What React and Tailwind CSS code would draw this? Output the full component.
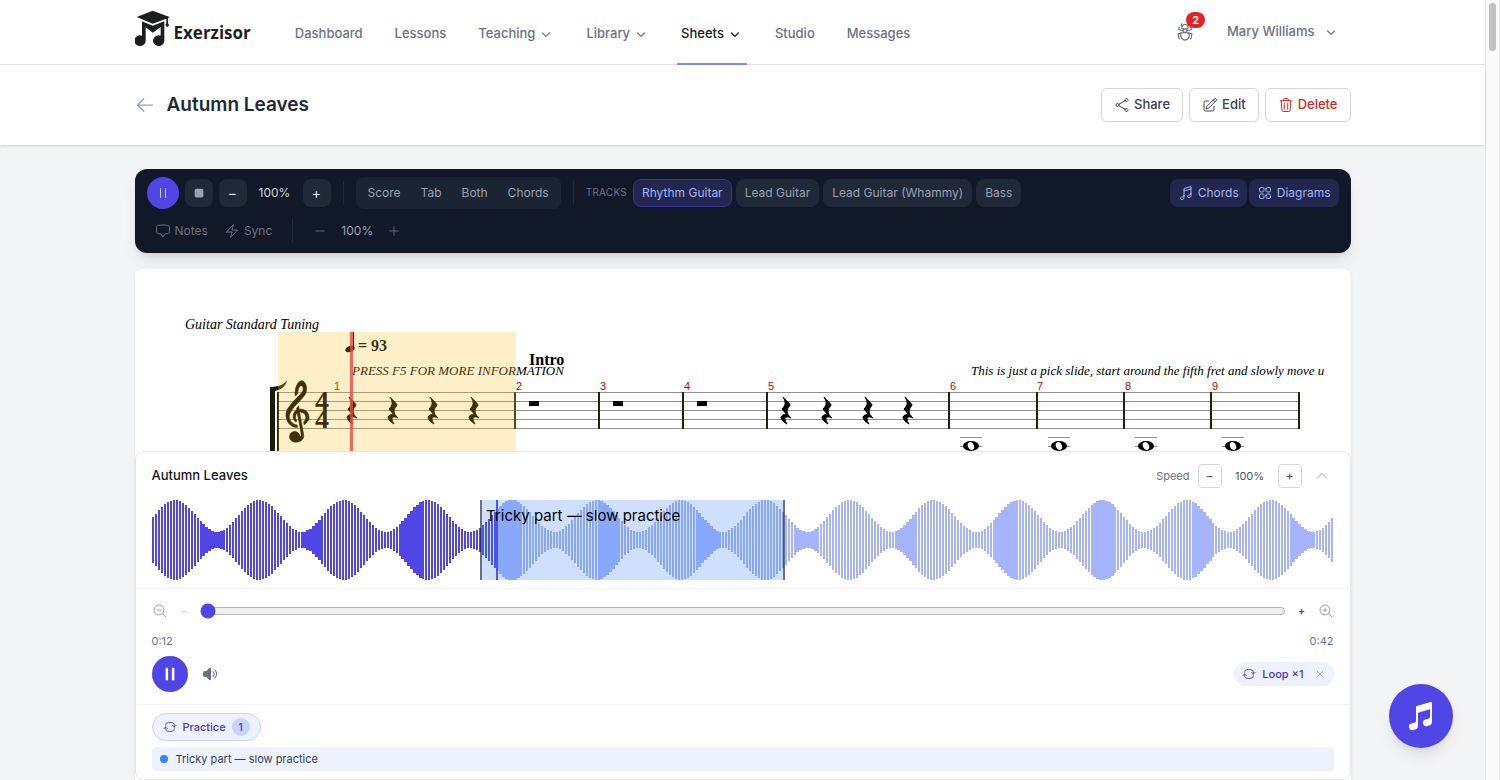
import React, { useState } from 'react';
import {
  HiMiniChevronDown,
  HiMusicalNote,
  HiOutlineArrowLeft,
  HiOutlineArrowPathRoundedSquare,
  HiOutlineBolt,
  HiOutlineBugAnt,
  HiOutlineChatBubbleBottomCenter,
  HiOutlineChevronUp,
  HiOutlineMagnifyingGlassMinus,
  HiOutlineMagnifyingGlassPlus,
  HiOutlineMinus,
  HiOutlineMusicalNote,
  HiOutlinePause,
  HiOutlinePencilSquare,
  HiOutlinePlus,
  HiOutlineShare,
  HiOutlineSquares2X2,
  HiOutlineTrash,
  HiOutlineXMark,
  HiPause,
  HiSpeakerWave,
  HiStop,
} from 'react-icons/hi2';
import { GiGClef } from 'react-icons/gi';

const NAV_ITEMS = [
  { label: 'Dashboard' },
  { label: 'Lessons' },
  { label: 'Teaching', menu: true },
  { label: 'Library', menu: true },
  { label: 'Sheets', menu: true, active: true },
  { label: 'Studio' },
  { label: 'Messages' },
];

const VIEWS = ['Score', 'Tab', 'Both', 'Chords'];
const TRACKS = ['Rhythm Guitar', 'Lead Guitar', 'Lead Guitar (Whammy)', 'Bass'];

function Logo() {
  return (
    <a href="#home" className="flex items-end gap-1 text-[#1d1f1f]">
      <svg width="35" height="37" viewBox="0 0 105 111" fill="currentColor">
        <path d="M53 2 L104 21 L99 24 V40 C103 43 103 49 97 51 C91 49 90 44 94 40 V26 L53 41 L5 21 Z" />
        <path d="M21 34 L53 47 L88 34 V92 A17 16 0 1 1 77 77 V51 L53 68 L32 52 V92 A17 16 0 1 1 21 77 Z" />
      </svg>
      <span className="font-['Open_Sans',sans-serif] text-[17px] leading-7 font-bold">Exerzisor</span>
    </a>
  );
}

function NavBar() {
  return (
    <nav className="border-b border-gray-200 bg-white">
      <div className="mx-auto flex h-16 max-w-7xl justify-between px-8">
        <div className="flex">
          <div className="flex items-center pb-2">
            <Logo />
          </div>
          <div className="ml-10 flex gap-6">
            {NAV_ITEMS.map((item) => {
              const Tag = item.menu ? 'button' : 'a';
              return (
                <Tag
                  key={item.label}
                  href={item.menu ? undefined : '#' + item.label.toLowerCase()}
                  className={
                    item.active
                      ? '-mb-px flex items-center gap-[3px] border-b-2 border-[#818cf8] px-1 pt-1 text-[13px] font-medium text-gray-900'
                      : '-mb-px flex items-center gap-[3px] border-b-2 border-transparent px-1 pt-1 text-[13px] font-medium text-gray-500'
                  }
                >
                  {item.label}
                  {item.menu && <HiMiniChevronDown className="size-4" />}
                </Tag>
              );
            })}
          </div>
        </div>
        <div className="flex items-center gap-6 pr-3">
          <button aria-label="Bug reports" className="relative p-2 text-gray-500">
            <HiOutlineBugAnt className="size-5" />
            <span className="absolute -top-0.5 -right-0.5 rounded-full bg-[#dc2626] px-1.5 text-[11px] leading-4 font-semibold text-white">
              2
            </span>
          </button>
          <button className="flex items-center gap-2 text-[13px] font-medium text-gray-500">
            Mary Williams
            <HiMiniChevronDown className="size-4" />
          </button>
        </div>
      </div>
    </nav>
  );
}

function PageHeader() {
  const button = 'flex h-[34px] items-center gap-1 rounded-md border border-gray-300 bg-white px-3 text-[13px] font-medium';

  return (
    <header className="relative bg-white shadow-sm">
      <div className="mx-auto flex h-20 max-w-7xl items-center justify-between px-8">
        <div className="flex items-center gap-3">
          <a href="#sheets" aria-label="Back" className="text-gray-400">
            <HiOutlineArrowLeft className="size-5" />
          </a>
          <h1 className="text-[19px] font-semibold text-gray-800">Autumn Leaves</h1>
        </div>
        <div className="flex items-center gap-1.5">
          <button className={button + ' text-gray-700'}>
            <HiOutlineShare className="size-4" />
            Share
          </button>
          <button className={button + ' text-gray-700'}>
            <HiOutlinePencilSquare className="size-4" />
            Edit
          </button>
          <button className={button + ' text-[#dc2626]'}>
            <HiOutlineTrash className="size-4" />
            Delete
          </button>
        </div>
      </div>
    </header>
  );
}

function Toolbar() {
  const [track, setTrack] = useState('Rhythm Guitar');
  const square = 'flex size-7 items-center justify-center rounded-lg bg-[#1f2937] text-sm text-gray-200';
  const toggle = 'flex h-7 items-center gap-1 rounded-lg bg-[#21274d] px-2 text-[#a5b4fc]';

  return (
    <div className="rounded-xl bg-[#111827] px-3 py-2 text-xs shadow-lg">
      <div className="flex items-center gap-3">
        <div className="flex items-center gap-1.5">
          <button aria-label="Pause" className="flex size-8 items-center justify-center rounded-full bg-[#4f46e5] text-[#c7d2fe]">
            <HiOutlinePause className="size-4" />
          </button>
          <button aria-label="Stop" className={square}>
            <HiStop className="size-3.5 text-gray-400" />
          </button>
          <button aria-label="Slower" className={square}>−</button>
          <span className="w-11 text-center text-gray-300">100%</span>
          <button aria-label="Faster" className={square}>+</button>
        </div>
        <div className="h-6 w-px bg-[#1f2937]" />
        <div className="flex h-8 items-center rounded-lg bg-[#1a2433] px-0.5">
          {VIEWS.map((view) => (
            <button key={view} className="px-2.5 text-gray-400">
              {view}
            </button>
          ))}
        </div>
        <div className="h-6 w-px bg-[#1f2937]" />
        <div className="flex items-center gap-1">
          <span className="mr-0.5 text-[10px] tracking-wide text-gray-500">TRACKS</span>
          {TRACKS.map((name) => (
            <button
              key={name}
              onClick={() => setTrack(name)}
              className={
                name === track
                  ? 'h-7 rounded-lg border border-[#3730a3] bg-[#21274d] px-2 text-[#a5b4fc]'
                  : 'h-7 rounded-lg border border-[#1f2937] bg-[#1f2937] px-2 text-gray-400'
              }
            >
              {name}
            </button>
          ))}
        </div>
        <div className="ml-auto flex gap-0.5">
          <button className={toggle}>
            <HiOutlineMusicalNote className="size-4" />
            Chords
          </button>
          <button className={toggle}>
            <HiOutlineSquares2X2 className="size-4" />
            Diagrams
          </button>
        </div>
      </div>
      <div className="mt-2 flex h-7 items-center text-gray-500">
        <button className="flex items-center gap-1 px-2">
          <HiOutlineChatBubbleBottomCenter className="size-4" />
          Notes
        </button>
        <button className="flex items-center gap-1 px-2">
          <HiOutlineBolt className="size-4" />
          Sync
        </button>
        <div className="mx-3 h-6 w-px bg-[#1f2937]" />
        <button aria-label="Zoom out" className="px-2">
          <HiOutlineMinus className="size-3.5" />
        </button>
        <span className="w-11 text-center text-gray-400">100%</span>
        <button aria-label="Zoom in" className="px-2">
          <HiOutlinePlus className="size-3.5" />
        </button>
      </div>
    </div>
  );
}

const STAFF_LINES = [107, 116, 125, 134, 143];
const BARS = [
  { n: 1, x: 183, line: 126 },
  { n: 2, x: 365, line: 363 },
  { n: 3, x: 449, line: 447 },
  { n: 4, x: 533, line: 531 },
  { n: 5, x: 617, line: 615 },
  { n: 6, x: 799, line: 797 },
  { n: 7, x: 886, line: 885 },
  { n: 8, x: 974, line: 972 },
  { n: 9, x: 1061, line: 1059 },
];
const QUARTER_RESTS = [201, 242, 282, 323, 635, 676, 717, 757];
const BAR_RESTS = [378, 462, 546];
const WHOLE_NOTES = [820, 908, 995, 1082];

function Score() {
  return (
    <svg className="h-full w-full" aria-label="Score" fontFamily="'Liberation Serif', serif">
      {STAFF_LINES.map((y) => (
        <rect key={y} x="127" y={y} width="1021" height="1" fill="#8f8f8f" />
      ))}
      {BARS.map((bar) => (
        <g key={bar.n}>
          <rect x={bar.line} y="107" width="2" height={bar.n === 1 ? 100 : 37} fill="#222211" />
          <text x={bar.x} y="105" fill="#cc0000" fontSize="11" fontFamily="'Liberation Sans', sans-serif">
            {bar.n}
          </text>
        </g>
      ))}
      <rect x="1147" y="107" width="2" height="37" fill="#222211" />

      {/* system bracket */}
      <path d="M119 180 V102 C126 102 133 100 136 95 C135 102 129 105 124 106 V180 Z" fill="#1c1c10" />

      <GiGClef x="113" y="93" size="67" stroke="#000" strokeWidth="5" />
      <text x="164" y="125" fontSize="28" fontWeight="bold">4</text>
      <text x="164" y="143" fontSize="28" fontWeight="bold">4</text>

      {QUARTER_RESTS.map((x) => (
        <path
          key={x}
          transform={`translate(${x} 125)`}
          stroke="#000"
          d="M-3 -13 C0 -10 4 -6 4 -5 C4 -4 1 -2 1 1 C1 4 3 6 5 8 C1 6 -1 7 -1 9 C-1 11 0 12 1 14 C-3 12 -5 9 -5 7 C-4 5 -2 4 1 5 L-4 -1 C0 -5 0 -8 -3 -13 Z"
        />
      ))}
      {BAR_RESTS.map((x) => (
        <rect key={x} x={x} y="116" width="10" height="5" />
      ))}
      {WHOLE_NOTES.map((x) => (
        <g key={x}>
          <rect x={x - 11} y="152" width="22" height="1" fill="#8f8f8f" />
          <rect x={x - 11} y="161" width="22" height="1" fill="#8f8f8f" />
          <ellipse cx={x} cy="161" rx="8" ry="5" />
          <ellipse cx={x} cy="161" rx="3" ry="4" fill="#fff" transform={`rotate(-25 ${x} 161)`} />
        </g>
      ))}

      <text x="34" y="44" fontSize="14" fontStyle="italic">Guitar Standard Tuning</text>
      <ellipse cx="199" cy="64" rx="5" ry="3" transform="rotate(-20 199 64)" />
      <rect x="202" y="47" width="1" height="17" />
      <text x="207" y="66" fontSize="16" fontWeight="bold">= 93</text>
      <text x="201" y="90" fontSize="13" fontStyle="italic">PRESS F5 FOR MORE INFORMATION</text>
      <text x="378" y="80" fontSize="16" fontWeight="bold">Intro</text>
      <text x="820" y="90" fontSize="13" fontStyle="italic">
        This is just a pick slide, start around the fifth fret and slowly move u
      </text>

      {/* current bar and playback cursor */}
      <rect x="127" y="47" width="238" height="140" fill="#fbbf24" opacity="0.25" />
      <rect x="199" y="47" width="3" height="140" fill="#ef4444" opacity="0.8" />
    </svg>
  );
}

const WAVE_WIDTH = 1182;
const PROGRESS = 29.1;

function wavePath() {
  let d = '';
  for (let x = 0; x < WAVE_WIDTH - 2; x += 2.97) {
    const h = 24 + 16 * Math.cos(((x - 22) / 84.3) * 2 * Math.PI);
    d += `M${x} ${40 - h}h2.2v${h * 2}h-2.2z`;
  }
  return d;
}

function Waveform() {
  const d = wavePath();
  return (
    <div className="relative h-20">
      <svg className="h-full w-full" viewBox={`0 0 ${WAVE_WIDTH} 80`} preserveAspectRatio="none" shapeRendering="crispEdges">
        <clipPath id="played">
          <rect width={(WAVE_WIDTH * PROGRESS) / 100} height="80" />
        </clipPath>
        <clipPath id="unplayed">
          <rect x={(WAVE_WIDTH * PROGRESS) / 100} width={WAVE_WIDTH} height="80" />
        </clipPath>
        <path d={d} fill="#a5b4fc" clipPath="url(#unplayed)" />
        <path d={d} fill="#4f46e5" clipPath="url(#played)" />
        <rect x={(WAVE_WIDTH * PROGRESS) / 100} width="2" height="80" fill="#4f46e5" />
      </svg>
      <div className="absolute inset-y-0 left-[27.8%] w-[25.8%] border-x-2 border-black/50 bg-[#3b82f6]/25 px-1 pt-1 text-[15px] leading-6 text-black">
        Tricky part — slow practice
      </div>
    </div>
  );
}

function Player() {
  const [zoom, setZoom] = useState(0);
  const step = 'flex size-6 items-center justify-center rounded border border-gray-300 text-xs font-medium text-gray-600';

  return (
    <section className="shrink-0 rounded-lg border border-gray-200 bg-white text-[11px] text-gray-500">
      <div className="border-b border-gray-100 px-4 pt-3 pb-2">
        <div className="mb-3 flex items-center justify-between">
          <h2 className="text-[13px] font-medium text-gray-900">Autumn Leaves</h2>
          <div className="flex items-center gap-2">
            <span>Speed</span>
            <button aria-label="Slower" className={step}>−</button>
            <span className="w-10 text-center text-gray-600">100%</span>
            <button aria-label="Faster" className={step}>+</button>
            <button aria-label="Collapse" className="flex size-6 items-center justify-center text-gray-400">
              <HiOutlineChevronUp className="size-4" />
            </button>
          </div>
        </div>
        <Waveform />
      </div>

      <div className="border-b border-gray-100 px-4 py-3">
        <div className="flex h-5 items-center gap-2">
          <HiOutlineMagnifyingGlassMinus className="size-4 text-gray-400" />
          <button aria-label="Zoom out" className="w-4 text-gray-300">−</button>
          <input
            type="range"
            aria-label="Zoom"
            value={zoom}
            onChange={(e) => setZoom(e.target.value)}
            className="min-w-0 flex-1 accent-[#4f46e5]"
          />
          <button aria-label="Zoom in" className="w-4 font-semibold text-gray-600">+</button>
          <HiOutlineMagnifyingGlassPlus className="size-4 text-gray-400" />
        </div>
        <div className="mt-3 flex h-4 items-center justify-between">
          <span>0:12</span>
          <span>0:42</span>
        </div>
        <div className="mt-[7px] flex items-center justify-between">
          <div className="flex items-center gap-3.5">
            <button aria-label="Pause" className="flex size-9 items-center justify-center rounded-full bg-[#4f46e5] text-white">
              <HiPause className="size-5" />
            </button>
            <button aria-label="Mute">
              <HiSpeakerWave className="size-4" />
            </button>
          </div>
          <div className="flex h-6 items-center gap-1.5 rounded-full bg-[#eef2ff] px-2 font-medium text-[#4338ca]">
            <HiOutlineArrowPathRoundedSquare className="size-3.5" />
            Loop ×1
            <button aria-label="Stop looping" className="ml-1 text-[#818cf8]">
              <HiOutlineXMark className="size-3" />
            </button>
          </div>
        </div>
      </div>

      <div className="px-4 py-2">
        <button className="flex h-7 items-center gap-1.5 rounded-full border border-[#c7d2fe] bg-[#eef2ff] px-2.5 font-medium text-[#4338ca]">
          <HiOutlineArrowPathRoundedSquare className="size-3.5" />
          Practice
          <span className="flex size-[18px] items-center justify-center rounded-full bg-[#c7d2fe] text-[10px]">1</span>
        </button>
        <button className="mt-1.5 flex h-6 w-full items-center gap-2 rounded bg-[#eef2ff] px-2 text-gray-700">
          <span className="size-2 rounded-full bg-[#3b82f6]" />
          Tricky part — slow practice
        </button>
      </div>
    </section>
  );
}

export default function App() {
  return (
    <div className="flex h-screen overflow-hidden bg-[#f3f4f6] font-['Inter',sans-serif]">
      <div className="relative flex min-w-0 flex-1 flex-col">
        <NavBar />
        <PageHeader />
        <main className="mx-auto flex min-h-0 w-full max-w-7xl flex-1 flex-col px-8 pt-6">
          <Toolbar />
          <div className="mt-4 flex min-h-0 flex-1 flex-col rounded-t-lg bg-white shadow-sm">
            <div className="min-h-0 flex-1 overflow-hidden px-4 pt-4">
              <Score />
            </div>
            <Player />
          </div>
        </main>
        <button
          aria-label="Open practice tools"
          className="absolute right-8 bottom-8 flex size-16 items-center justify-center rounded-full bg-[#4f46e5] text-white shadow-lg"
        >
          <HiMusicalNote className="size-8" />
        </button>
      </div>
      {/* scroll bar */}
      <div className="w-[15px] shrink-0 border-x border-gray-200 bg-[#fafafa] px-[3px] py-[3px]">
        <div className="h-12 rounded-full bg-[#c1c1c1]" />
      </div>
    </div>
  );
}
